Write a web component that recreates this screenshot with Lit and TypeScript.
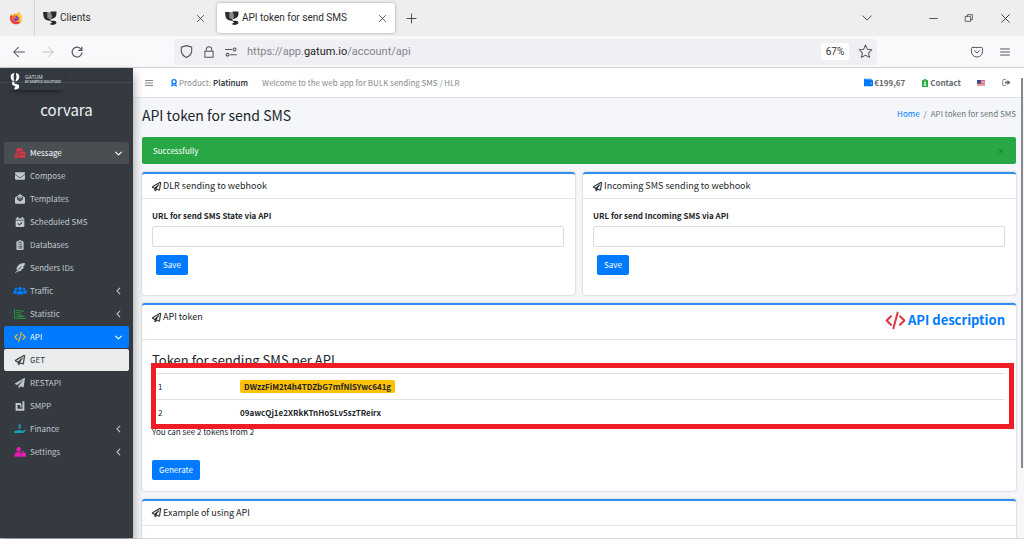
import { LitElement, html, css, svg } from "lit";
import { customElement, property } from "lit/decorators.js";
import { classMap } from "lit/directives/class-map.js";

const plane = svg`<path fill="currentColor" stroke="currentColor" stroke-width="14" d="M440 6.5L24 246.4c-34.4 19.9-31.1 70.8 5.7 85.9L144 379.6V464c0 46.4 59.2 65.5 86.6 28.6l43.8-59.1 111.9 46.2c5.9 2.4 12.1 3.6 18.3 3.6 8.2 0 16.3-2.1 23.6-6.2 12.8-7.2 21.6-20 23.9-34.5l59.4-387.2c6.1-40.1-36.9-68.8-71.5-48.9zM192 464v-64.6l36.6 15.1L192 464zm212.6-28.7l-153.8-63.5L391 169.5c10.7-15.5-9.5-33.5-23.7-21.2L155.8 332.6 48 288 464 48l-59.4 387.3z"/>`;
const line = (d: string, w = 40) =>
  svg`<path fill="none" stroke="currentColor" stroke-width=${w} stroke-linecap="round" stroke-linejoin="round" d=${d} />`;
const fill = (d: string) => svg`<path fill="currentColor" fill-rule="evenodd" d=${d} />`;

const shapes: Record<string, unknown> = {
  plane,
  planeSolid: fill("M476 3.2L12.5 270.6c-18.1 10.4-15.8 35.6 2.2 43.2L121 358.4l287.3-253.2c5.5-4.9 13.3 2.6 8.6 8.3L176 407v80.5c0 23.6 28.5 32.9 42.5 15.8L282 426l124.6 52.2c14.2 6 30.4-2.9 33-18.2l72-432C515 7.8 493.3-6.8 476 3.2z"),
  envelope: fill("M502.3 190.8c3.9-3.1 9.7-.2 9.7 4.7V400c0 26.5-21.5 48-48 48H48c-26.5 0-48-21.5-48-48V195.6c0-5 5.7-7.8 9.7-4.7 22.4 17.4 52.1 39.5 154.1 113.6 21.1 15.4 56.7 47.8 92.2 47.6 35.7.3 72-32.8 92.3-47.6 102-74.1 131.6-96.3 154-113.7zM256 320c23.2.4 56.6-29.2 73.4-41.4 132.7-96.3 142.8-104.7 173.4-128.7 5.8-4.5 9.2-11.5 9.2-18.9v-19c0-26.5-21.5-48-48-48H48c-26.5 0-48 21.5-48 48v19c0 7.4 3.4 14.3 9.2 18.9 30.6 23.9 40.7 32.4 173.4 128.7 16.8 12.2 50.2 41.8 73.4 41.4z"),
  mailbulk: fill("M150 10H350Q380 10 380 40V150H210Q165 150 165 195V240H80V40Q80 10 150 10ZM10 250H120L195 250V300L110 355L-20 285Q-15 250 10 250ZM-20 320L110 390L195 340V500H10Q-20 500 -20 470ZM230 175H500Q532 175 532 210V240L370 330L200 240V205Q205 175 230 175ZM220 280L370 365L532 280V470Q532 500 500 500H220Z"),
  openmail: fill("M256 0L490 165Q512 180 512 210V460Q512 500 470 500H42Q0 500 0 460V210Q0 180 22 165ZM110 140V285L256 380L402 285V140ZM150 170H362V210H150ZM150 240H362V275H150Z"),
  calendar: fill("M100 0H165V60H347V0H412V60H440Q480 60 480 100V145H32V100Q32 60 72 60H100ZM32 180H480V470Q480 512 440 512H72Q32 512 32 470ZM345 255L225 370L165 310L130 345L225 435L380 290Z"),
  clipboard: fill("M170 60Q180 0 256 0Q332 0 342 60H400Q440 60 440 100V470Q440 512 400 512H112Q72 512 72 470V100Q72 60 112 60ZM256 40A25 25 0 1 0 257 40ZM160 130V165H352V130ZM140 230V270H180V230ZM220 230V270H370V230ZM140 310V350H180V310ZM220 310V350H370V310ZM140 390V430H180V390ZM220 390V430H370V390Z"),
  feather: fill("M505 5C400 -5 270 20 160 130C75 215 75 300 90 385L300 180L325 205L5 485L35 510L125 430C220 440 300 415 365 345H270L410 290C430 255 450 220 455 200H370L475 150C500 95 512 50 505 5Z"),
  users: fill("M256 50A95 95 0 1 1 255 50ZM50 80A70 70 0 1 1 49 80ZM462 80A70 70 0 1 1 461 80ZM110 290Q170 250 256 250Q342 250 402 290V440H110ZM-80 225Q20 195 90 240L85 400H-80ZM592 225Q492 195 422 240L427 400H592Z"),
  chart: svg`${line("M-20 20V480H540", 45)}${line("M90 380H470M90 270L350 340M90 170L300 210M90 70L420 120", 44)}`,
  code: svg`${line("M120 130L-10 256L120 382M392 130L522 256L392 382M320 20L192 492", 62)}`,
  block: svg`<path fill="none" stroke="currentColor" stroke-width="100" d="M310 150H80V450H430V10"/>${fill("M270 190H340V330H270Z")}`,
  hand: svg`${fill("M-40 360H50L160 310H300Q330 330 300 360H390L500 300Q580 290 540 345L410 460H-40Z")}${line("M300 50Q180 10 180 80Q190 120 260 120Q310 140 290 180Q240 230 180 190M240 0V235", 40)}`,
  userlock: fill("M190 0A120 120 0 1 1 189 0ZM-30 480Q-40 280 120 270H280V500H-30ZM330 310V280Q340 210 405 210Q470 210 480 280V310H560V500H295V310ZM370 310H440V280Q440 250 405 250Q370 250 370 280Z"),
  chevDown: line("M90 180L256 340L422 180", 62),
  tabList: line("M40 150L256 362L472 150", 42),
  chevLeft: line("M330 60L170 226L330 392", 62),
  bars: line("M30 100H482M30 256H482M30 412H482", 50),
  award: svg`<circle cx="256" cy="180" r="135" fill="none" stroke="currentColor" stroke-width="85"/>${fill("M110 310L70 500L185 450L256 400L327 450L442 500L402 310L256 380Z")}`,
  wallet: fill("M30 40H440V95H80V115H470Q512 115 512 155V440Q512 475 475 475H40Q0 475 0 435V80Q0 40 30 40ZM410 270A28 28 0 1 0 411 270Z"),
  badge: fill("M180 0H332V70H400Q450 70 450 120V512H62V120Q62 70 112 70H180ZM230 40V100H282V40ZM256 170A60 60 0 1 0 257 170ZM150 420H362Q362 320 256 320Q150 320 150 420Z"),
  logout: svg`${line("M190 90H80Q40 90 40 130V382Q40 422 80 422H190", 48)}${fill("M170 205H310V110L490 256L310 402V307H170Z")}`,
  back: line("M490 256H30M230 60L30 256L230 452", 44),
  forward: line("M22 256H482M282 60L482 256L282 452", 40),
  reload: line("M430 140A210 210 0 1 0 465 290M465 50V190H325", 50),
  shield: line("M256 25L460 85V240Q450 400 256 490Q62 400 52 240V85Z", 44),
  lock: line("M80 220H432V480H80ZM140 220V130Q150 30 256 30Q362 30 372 130V220", 44),
  sliders: line("M20 150H290M410 90A60 60 0 1 1 409 90M230 370H490M110 310A60 60 0 1 1 109 310", 44),
  star: line("M256 5L332 165L505 187L378 308L412 488L256 400L100 488L134 308L7 187L180 165Z", 40),
  pocket: line("M60 60H452Q490 60 490 100V250A234 220 0 0 1 22 250V100Q22 60 60 60ZM150 200L256 300L362 200", 42),
  close: line("M80 80L432 432M432 80L80 432", 42),
  plus: line("M256 0V512M0 256H512", 46),
  minus: line("M40 256H472", 44),
  restore: line("M40 150H362V472H40ZM150 150V40H472V362H362", 44),
};

const icon = (name: string, size: number, cls = "") =>
  html`<svg class=${cls} width=${size} height=${size} viewBox="0 0 512 512" overflow="visible" aria-hidden="true">${shapes[name]}</svg>`;

const favicon = (w: number, h: number) => html`
  <svg width=${w} height=${h} viewBox="0 0 26 26" aria-hidden="true">
    <path fill="#8a8a8a" d="M7 2H17V14H7Z"/>
    <path fill="#2b2b2b" d="M0 2H8V13L14 15V18Q3 18 1 10ZM14 1H25V5Q25 14 14 15L17 10ZM12 17Q16 19 20 18Q25 18 25 22Q24 26 17 26L12 24L17 22Z"/>
  </svg>`;

const reset = css`
  * { box-sizing: border-box; }
  button { font: inherit; color: inherit; border: 0; padding: 0; background: none; display: flex; align-items: center; justify-content: center; }
  a { color: inherit; text-decoration: none; }
  svg { display: block; flex: none; }
`;

@customElement("browser-chrome")
class BrowserChrome extends LitElement {
  static styles = [reset, css`
    :host { display: block; font: 10px/16px Roboto, sans-serif; color: #2b2b30; }
    .tabs { display: flex; align-items: center; height: 36px; background: #eeeeee; }
    .fox { width: 35px; height: 36px; display: flex; align-items: center; padding-left: 9px; border-right: 1px solid #d4d4d8; }
    .tab { display: flex; align-items: center; gap: 3px; width: 178px; height: 30px; padding: 0 8px; border-radius: 3px; margin-right: 4px; }
    .tab span { flex: 1; text-align: left; }
    .tab.active { background: #fff; box-shadow: 0 0 3px #9a9a9a; }
    .new { margin-left: 8px; }
    .window { margin-left: auto; display: flex; align-items: center; gap: 27px; padding-right: 13px; }
    .list { margin-right: 30px; }
    .nav { display: flex; align-items: center; height: 32px; background: #f9f9fb; border-bottom: 1px solid #cfcfd4; color: #55555c; }
    .moves { display: flex; gap: 17px; padding-left: 13px; width: 174px; }
    .off { color: #bbb; }
    .url { flex: 1; display: flex; align-items: center; gap: 10px; height: 26px; padding: 0 5px 0 6px; background: #f0f0f4; border-radius: 3px; }
    .address { flex: 1; font-size: 11px; color: #83838b; }
    .address b { font-weight: 400; color: #222; }
    .zoom { width: 28px; height: 17px; font-size: 10px; background: #fff; border-radius: 2px; color: #333; }
    .tools { display: flex; gap: 17px; padding: 0 14px 0 94px; }
  `];
  render() {
    return html`
      <div class="tabs">
        <div class="fox">
          <svg width="14" height="14" viewBox="0 0 28 28" aria-hidden="true">
            <path fill="#ff9a1f" d="M4 6L7 9L12 4L14 8L19 2Q26 8 26 16Q24 26 14 27Q3 26 2 15Q2 9 4 6Z"/>
            <path fill="#f0364e" d="M3 9Q0 20 9 25Q18 29 24 21Q16 24 9 19Q4 15 8 10Z"/>
            <path fill="#ffd43a" d="M19 2Q27 8 26 17Q24 22 21 22Q24 14 18 9Z"/>
            <circle cx="14" cy="15" r="5" fill="#7b43d6"/><path fill="#ff7b20" d="M8 10Q13 9 15 13L10 15Z"/>
          </svg>
        </div>
        <div class="tab">${favicon(14, 14)}<span>Clients</span><button aria-label="Close Clients">${icon("close", 9)}</button></div>
        <div class="tab active">${favicon(14, 14)}<span>API token for send SMS</span><button aria-label="Close tab">${icon("close", 9)}</button></div>
        <button class="new" aria-label="New tab">${icon("plus", 9)}</button>
        <div class="window">
          <button class="list" aria-label="List tabs">${icon("tabList", 10)}</button>
          <button aria-label="Minimize">${icon("minus", 9)}</button>
          <button aria-label="Restore">${icon("restore", 8)}</button>
          <button aria-label="Close">${icon("close", 11)}</button>
        </div>
      </div>
      <div class="nav">
        <div class="moves">
          <button aria-label="Back">${icon("back", 12)}</button>
          <button class="off" aria-label="Forward">${icon("forward", 12)}</button>
          <button aria-label="Reload">${icon("reload", 12)}</button>
        </div>
        <div class="url">
          ${icon("shield", 13)}${icon("lock", 12)}${icon("sliders", 12)}
          <div class="address" role="textbox" aria-label="Address">https://app.<b>gatum.io</b>/account/api</div>
          <button class="zoom">67%</button>
          <button aria-label="Bookmark">${icon("star", 13)}</button>
        </div>
        <div class="tools">
          <button aria-label="Pocket">${icon("pocket", 12)}</button>
          <button aria-label="Menu">${icon("bars", 10)}</button>
        </div>
      </div>`;
  }
}

interface Item { icon: string; label: string; tone?: string; state?: string; arrow?: string; }

const items: Item[] = [
  { icon: "mailbulk", label: "Message", tone: "red", state: "open", arrow: "chevDown" },
  { icon: "envelope", label: "Compose" },
  { icon: "openmail", label: "Templates" },
  { icon: "calendar", label: "Scheduled SMS" },
  { icon: "clipboard", label: "Databases" },
  { icon: "feather", label: "Senders IDs" },
  { icon: "users", label: "Traffic", tone: "blue", arrow: "chevLeft" },
  { icon: "chart", label: "Statistic", tone: "green", arrow: "chevLeft" },
  { icon: "code", label: "API", tone: "yellow", state: "active", arrow: "chevDown" },
  { icon: "plane", label: "GET", state: "current" },
  { icon: "planeSolid", label: "RESTAPI" },
  { icon: "block", label: "SMPP" },
  { icon: "hand", label: "Finance", tone: "teal", arrow: "chevLeft" },
  { icon: "userlock", label: "Settings", tone: "pink", arrow: "chevLeft" },
];

@customElement("side-menu")
class SideMenu extends LitElement {
  static styles = [reset, css`
    :host { display: block; background: #343a40; color: #c2c7d0; box-shadow: 0 6px 10px rgba(0, 0, 0, .4); z-index: 1; }
    .brand { height: 15px; border-bottom: 1px solid #444b52; }
    .logo { display: flex; gap: 5px; width: 54px; height: 22px; margin-left: 10px; padding-top: 4px; color: #dfe2e5; box-shadow: 0 4px 4px -2px rgba(0, 0, 0, .4); }
    .logo div { padding-top: 3px; }
    .logo p { margin: 0; font: 5px/5px "Open Sans", sans-serif; }
    .logo p + p { font-size: 3px; font-weight: 600; white-space: nowrap; }
    .user { display: block; text-align: center; font-size: 15px; line-height: 24px; padding: 15px 0 20px; color: #f1f3f5; }
    nav { display: grid; gap: 1px; padding: 0 4px; }
    .item { display: flex; align-items: center; gap: 5px; height: 22px; padding: 0 6px 0 11px; border-radius: 2px; }
    .item span { flex: 1; }
    .open { background: #494e53; color: #fff; }
    .active { background: #007bff; color: #fff; }
    .current { background: #eaebec; color: #343a40; }
    .red { color: #dc3545; } .blue { color: #007bff; } .green { color: #28a745; }
    .yellow { color: #d9b83c; } .teal { color: #17a2b8; } .pink { color: #e81cb4; }
  `];
  render() {
    return html`
      <div class="brand"><div class="logo">
        <svg width="10" height="18" viewBox="0 0 20 38" aria-hidden="true">
          <path fill="#fff" d="M9 2Q0 3 1 11Q2 19 9 20Q5 11 9 2ZM12 2Q20 4 19 11Q18 18 11 20Q15 11 12 2ZM4 20L10 22L8 25Q19 25 19 31Q18 36 12 37Q7 37 9 33Q15 31 4 27Z"/>
        </svg>
        <div><p>GATUM</p><p>BY DEMPICO SOLUTIONS</p></div>
      </div></div>
      <a class="user" href="#">corvara</a>
      <nav>
        ${items.map((i) => html`
          <a href="#" class=${classMap({ item: true, [i.state ?? "plain"]: true })}>
            ${icon(i.icon, 10, i.tone ?? "")}<span>${i.label}</span>${i.arrow ? icon(i.arrow, 9) : ""}
          </a>`)}
      </nav>`;
  }
}

@customElement("panel-card")
class PanelCard extends LitElement {
  @property() heading = "";
  static styles = [reset, css`
    :host { display: block; background: #fff; border-top: 2px solid #2f8cf0; border-radius: 3px; box-shadow: 0 0 2px rgba(0, 0, 0, .3); }
    header { display: flex; justify-content: space-between; gap: 8px; padding: 5px 11px 5px 10px; border-bottom: 1px solid #e3e4e6; }
    h3 { display: flex; align-items: center; gap: 2px; margin: 0; font-size: 9px; font-weight: 400; line-height: 14px; height: 14px; }
    .body { padding: 11px 11px 11px 10px; }
  `];
  render() {
    return html`
      <header><h3>${icon("plane", 9)}${this.heading}</h3><slot name="tools"></slot></header>
      <div class="body"><slot></slot></div>`;
  }
}

@customElement("app-root")
class AppRoot extends LitElement {
  static styles = [reset, css`
    :host { display: flex; flex-direction: column; height: 100vh; overflow: hidden; font: 8px/12px "Noto Sans CJK SC", "Noto Sans", sans-serif; color: #212529; background: #f4f6f9; }
    .app { flex: 1; min-height: 0; display: grid; grid-template-columns: 133px minmax(0, 1fr); border-bottom: 1px solid #d8dadc; position: relative; }
    .main { overflow: hidden; }
    .top { display: flex; align-items: center; height: 30px; padding: 0 12px; background: #fff; border-bottom: 1px solid #dee2e6; color: #868a8e; }
    .top svg { margin-right: 1px; }
    .top button { color: #5a5e62; }
    .product { display: flex; align-items: center; margin: 0 14px 0 16px; }
    .product b { color: #212529; margin-left: 2px; font-weight: 500; }
    .right { margin-left: auto; display: flex; align-items: center; gap: 16px; color: #65696d; font-weight: 700; }
    .right a { display: flex; align-items: center; }
    .blue { color: #007bff; } .green { color: #28a745; } .red { color: #dc3545; }
    .content { padding: 0 8px 0 9px; }
    .title { display: flex; justify-content: space-between; align-items: flex-start; height: 39px; padding-top: 7px; }
    h1 { margin: 0; font-size: 14px; line-height: 20px; font-weight: 400; }
    .crumbs { display: flex; gap: 4px; line-height: 18px; color: #6c757d; }
    .crumbs a { color: #007bff; }
    .alert { display: flex; justify-content: space-between; align-items: center; height: 27px; padding: 0 11px; border-radius: 2px; background: #28a745; color: #fff; }
    .alert button { color: #1c7430; }
    .pair { display: grid; grid-template-columns: 1fr 1fr; gap: 8px; margin: 8px 0; }
    label { display: block; font-weight: 700; margin-bottom: 4px; }
    input { display: block; width: 100%; height: 21px; border: 1px solid #d9dde1; border-radius: 2px; background: #fff; padding: 0 6px; font: inherit; }
    .btn { height: 20px; padding: 0 7px; border-radius: 2px; background: #007bff; color: #fff; }
    .save { margin: 8px 4px 9px; }
    .docs { display: flex; align-items: center; gap: 4px; font-size: 13px; font-weight: 700; line-height: 20px; color: #007bff; height: 20px; margin-bottom: 4px; }
    .wide { margin-bottom: 8px; }
    h2 { margin: 1px 0 6px; font-size: 13px; font-weight: 400; line-height: 15px; }
    .tokens { position: relative; }
    .mark { position: absolute; inset: -10px -9px -3px -1px; border: 5px solid #ee1c25; pointer-events: none; }
    table { width: 100%; border-collapse: collapse; }
    td { height: 26px; padding: 0 6px; border-top: 1px solid #dee2e6; }
    td:first-child { width: 82px; }
    td b { font-weight: 700; }
    .code { padding: 1px 4px; border-radius: 2px; background: #ffc107; }
    .note { margin: 0 0 22px; }
    .thumb { position: absolute; right: 1px; top: 10px; width: 2px; height: 83%; background: #85888c; }
  `];
  render() {
    const hook = (heading: string, label: string, id: string) => html`
      <panel-card heading=${heading}>
        <label for=${id}>${label}</label><input id=${id} type="text" />
        <button class="btn save">Save</button>
      </panel-card>`;
    return html`
      <browser-chrome></browser-chrome>
      <div class="app">
        <side-menu></side-menu>
        <div class="main">
          <div class="top">
            <button aria-label="Toggle menu">${icon("bars", 8)}</button>
            <span class="product">${icon("award", 8, "blue")}Product: <b>Platinum</b></span>
            <span>Welcome to the web app for BULK sending SMS / HLR</span>
            <div class="right">
              <a href="#">${icon("wallet", 9, "blue")}€199,67</a>
              <a href="#">${icon("badge", 8, "green")}Contact</a>
              <a href="#" aria-label="English">
                <svg width="8" height="6" viewBox="0 0 16 12"><path fill="#f1d5d8" d="M0 0H16V12H0Z"/><path stroke="#d0455a" stroke-width="1.5" d="M0 1H16M0 4H16M0 7H16M0 10H16"/><path fill="#3c4a90" d="M0 0H8V7H0Z"/></svg>
              </a>
              <a href="#" aria-label="Log out">${icon("logout", 9)}</a>
            </div>
          </div>
          <div class="content">
            <div class="title">
              <h1>API token for send SMS</h1>
              <div class="crumbs"><a href="#">Home</a><span>/</span><span>API token for send SMS</span></div>
            </div>
            <div class="alert">Successfully<button aria-label="Dismiss">×</button></div>
            <div class="pair">
              ${hook("DLR sending to webhook", "URL for send SMS State via API", "state")}
              ${hook("Incoming SMS sending to webhook", "URL for send Incoming SMS via API", "incoming")}
            </div>
            <panel-card class="wide" heading="API token">
              <a class="docs" slot="tools" href="#">${icon("code", 17, "red")}API description</a>
              <h2>Token for sending SMS per API</h2>
              <div class="tokens">
                <table>
                  <tr><td>1</td><td><b class="code">DWzzFiM2t4h4TDZbG7mfNlSYwc641g</b></td></tr>
                  <tr><td>2</td><td><b>09awcQj1e2XRkKTnHoSLv5szTReirx</b></td></tr>
                </table>
                <div class="mark"></div>
              </div>
              <p class="note">You can see 2 tokens from 2</p>
              <button class="btn">Generate</button>
            </panel-card>
            <panel-card heading="Example of using API"></panel-card>
          </div>
        </div>
        <div class="thumb"></div>
      </div>`;
  }
}
